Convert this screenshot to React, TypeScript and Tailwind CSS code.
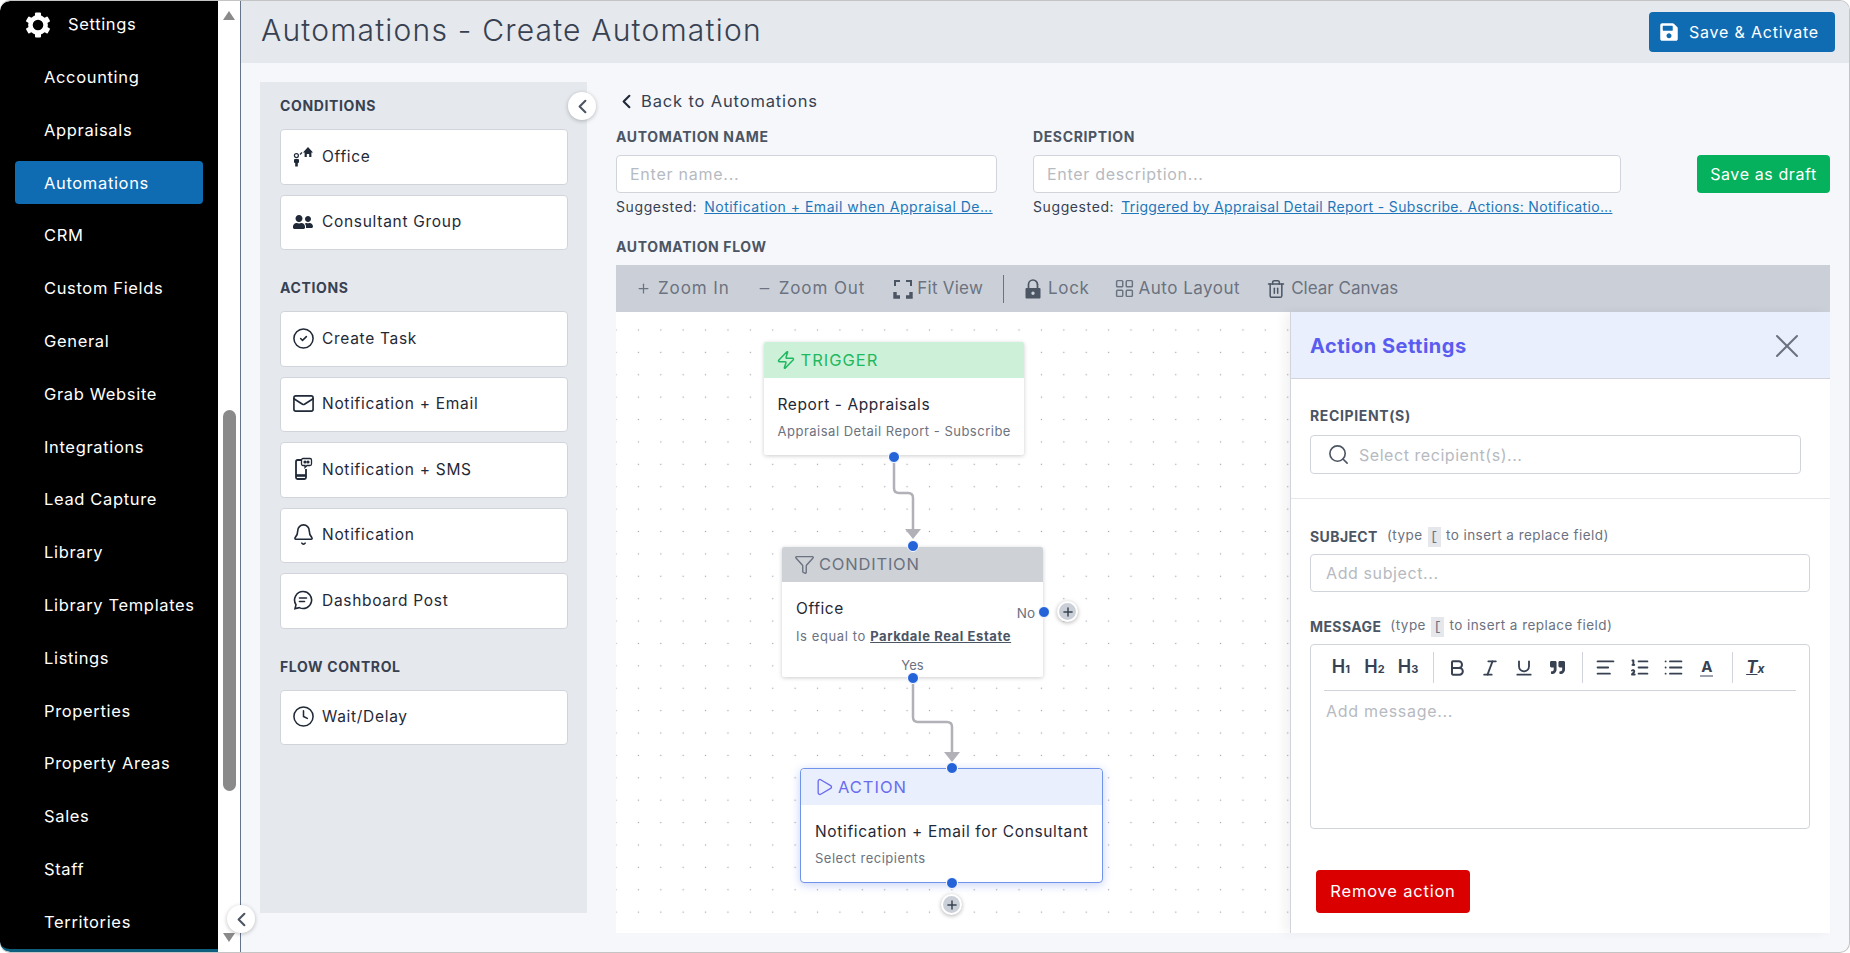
import { ChevronLeft, Plus, Minus, LayoutGrid, Trash2, Zap, Funnel, Play, X, Search, Mail, Bell, Clock, CircleCheck, Bold, Italic, Underline, AlignLeft, ListOrdered, List } from "lucide-react"
import { FaSave, FaUserFriends, FaQuoteRight } from "react-icons/fa"
import type { ReactNode } from "react"

const navItems = [
  "Accounting",
  "Appraisals",
  "Automations",
  "CRM",
  "Custom Fields",
  "General",
  "Grab Website",
  "Integrations",
  "Lead Capture",
  "Library",
  "Library Templates",
  "Listings",
  "Properties",
  "Property Areas",
  "Sales",
  "Staff",
  "Territories",
]

function GearIcon() {
  return (
    <svg viewBox="0 0 28 28" className="h-[28px] w-[28px]" fill="none" stroke="white">
      <circle cx="14" cy="14" r="7.6" strokeWidth="4.6" />
      {[0, 60, 120, 180, 240, 300].map((deg) => (
        <rect key={deg} x="11" y="1.5" width="6" height="5" rx="1" fill="white" stroke="none" transform={`rotate(${deg} 14 14)`} />
      ))}
    </svg>
  )
}

function OfficeIcon() {
  return (
    <svg viewBox="0 0 20 22" className="h-[22px] w-[20px]" fill="#1f2937">
      <path d="M10 7.5 15 2l5 5.5h-1.6V12h-2.2V9h-2.4v3h-2.2V7.5z" />
      <circle cx="3.4" cy="10.6" r="2" fill="none" stroke="#1f2937" strokeWidth="1.2" />
      <rect x="1" y="14" width="5" height="4" rx="1" />
      <rect x="2.2" y="17" width="2.6" height="4.5" />
      <path d="M7 9.5 9 7.5" stroke="#1f2937" strokeWidth="1.2" />
    </svg>
  )
}

function SmsIcon() {
  return (
    <svg viewBox="0 0 20 24" className="h-[24px] w-[20px]" fill="none" stroke="#1f2937" strokeWidth="1.8">
      <path d="M9 3H4.5A1.5 1.5 0 0 0 3 4.5v16A1.5 1.5 0 0 0 4.5 22h7a1.5 1.5 0 0 0 1.5-1.5V12" />
      <path d="M3 18.5h10" strokeWidth="2.6" />
      <path d="M10 1.5h7a1.5 1.5 0 0 1 1.5 1.5v4A1.5 1.5 0 0 1 17 8.5h-3l-2 2v-2h-2A1.5 1.5 0 0 1 8.5 7V3A1.5 1.5 0 0 1 10 1.5z" strokeWidth="1.3" />
      <circle cx="12" cy="5" r=".7" fill="#1f2937" />
      <circle cx="15" cy="5" r=".7" fill="#1f2937" />
    </svg>
  )
}

function PostIcon() {
  return (
    <svg viewBox="0 0 20 20" className="h-[20px] w-[20px] shrink-0" fill="none" stroke="#1f2937" strokeWidth="1.6" strokeLinecap="round">
      <path d="M10 1.5a8.5 8.5 0 1 1-3.7 16.1L2 18.6l1-3.9A8.5 8.5 0 0 1 10 1.5z" />
      <path d="M6.5 8h7M6.5 11.5h5" />
    </svg>
  )
}

function FitIcon() {
  return (
    <svg viewBox="0 0 20 20" className="h-[20px] w-[20px]" fill="none" stroke="#4b5563" strokeWidth="2">
      <path d="M2 7V2h5M13 2h5v5" />
      <path d="M2 13v5h5M18 13v5h-5" strokeWidth="3.4" />
    </svg>
  )
}

function LockIcon() {
  return (
    <svg viewBox="0 0 16 20" className="h-[20px] w-[16px]" fill="#4b5563">
      <path d="M3.5 9V5.5a4.5 4.5 0 0 1 9 0" fill="none" stroke="#4b5563" strokeWidth="1.7" />
      <path d="M12.5 5v4" stroke="#4b5563" strokeWidth="1.7" />
      <path fillRule="evenodd" d="M1.5 9h13a1 1 0 0 1 1 1v8.5a1 1 0 0 1-1 1h-13a1 1 0 0 1-1-1V10a1 1 0 0 1 1-1zM8 12.5a1.7 1.7 0 1 0 0 3.4 1.7 1.7 0 0 0 0-3.4z" />
    </svg>
  )
}

function PaletteRow({ icon, label }: { icon: ReactNode; label: string }) {
  return (
    <div className="flex h-[55.5px] items-center rounded border border-[#d1d5db] bg-white pb-[1px] pl-[12px] text-[15.5px] tracking-[0.7px] text-[#1f2937]">
      <span className="flex w-[20px] justify-center">{icon}</span>
      <span className="ml-[9px]">{label}</span>
    </div>
  )
}

function PaletteHeading({ children, className }: { children: ReactNode; className?: string }) {
  return <h3 className={`h-4 text-[14px] leading-4 font-bold tracking-[0.63px] text-[#374151] ${className}`}>{children}</h3>
}

function ToolbarButton({ icon, label, className, labelClass }: { icon: ReactNode; label: string; className?: string; labelClass: string }) {
  return (
    <span className={`flex items-center text-[#6b7280] ${className}`}>
      {icon}
      <span className={`text-[17px] ${labelClass}`}>{label}</span>
    </span>
  )
}

function Handle({ className }: { className: string }) {
  return <span className={`absolute h-[12px] w-[12px] rounded-full border border-white bg-[#2563d9] ${className}`} />
}

function AddButton({ className }: { className: string }) {
  return (
    <span className={`absolute flex h-[21px] w-[21px] items-center justify-center rounded-full border-2 border-white bg-[#cbd0d8] shadow-[0_1px_4px_rgba(0,0,0,0.3)] ${className}`}>
      <Plus size={14} strokeWidth={2.5} className="text-[#374151]" />
    </span>
  )
}

function EditorButton({ children }: { children: ReactNode }) {
  return <span className="flex w-[33.6px] justify-center text-[#374151]">{children}</span>
}

function EditorSep() {
  return <span className="mr-[6px] ml-[8px] h-[31px] w-px bg-[#d1d5db]" />
}

function HeadingGlyph({ n }: { n: number }) {
  return (
    <span className="text-[18px] leading-5 font-semibold text-[#374151]">
      H<span className="text-[11px] font-bold">{n}</span>
    </span>
  )
}

function FieldHint() {
  return (
    <span className="ml-[9px] text-[13.5px] font-normal tracking-[0.45px] text-[#6b7280]">
      (type <span className="mx-[1px] inline-block w-[13px] bg-[#e5e7eb] text-center font-mono">[</span> to insert a replace field)
    </span>
  )
}

export default function App() {
  return (
    <div className="relative flex h-[953px] w-[1850px] overflow-hidden rounded-[10px] border-y border-r border-[#c4c4c4] bg-[#f5f7fb] font-[Inter,sans-serif]">
      <aside className="flex h-full w-[218px] shrink-0 flex-col overflow-hidden rounded-l-[10px] border-b-[3px] border-[#0e5f7e] bg-black text-[16.5px] tracking-[0.65px] text-white">
        <div className="flex h-[50px] shrink-0 items-center pb-[3px] pl-[24px]">
          <GearIcon />
          <span className="ml-[16px]">Settings</span>
        </div>
        {navItems.map((item) => (
          <div key={item} className="flex h-[52.8px] shrink-0 items-center px-[15px]">
            <div className={`flex h-[43px] w-[190px] items-center rounded pl-[29px] ${item === "Automations" ? "bg-[#0f6cb3]" : ""}`}>{item}</div>
          </div>
        ))}
      </aside>

      <div className="flex h-full w-[23px] shrink-0 flex-col items-center border-r border-[#64748b] bg-white pt-[10px] pb-[10px]">
        <span className="h-0 w-0 border-x-[6px] border-b-[9px] border-x-transparent border-b-[#8a8a8a]" />
        <span className="mt-[390px] h-[381px] w-[13px] rounded-full bg-[#8a8a8a]" />
        <span className="mt-auto h-0 w-0 border-x-[6px] border-t-[9px] border-x-transparent border-t-[#8a8a8a]" />
      </div>

      <main className="flex min-w-0 flex-1 flex-col">
        <header className="flex h-[62px] shrink-0 items-start justify-between bg-[#e5e8ed] pr-[14.5px] pl-[20px]">
          <h1 className="mt-[11px] text-[30px] leading-[36px] font-light tracking-[1.2px] text-[#374151]">Automations - Create Automation</h1>
          <button className="mt-[11px] flex h-[40px] w-[185.5px] items-center rounded bg-[#0f6cb3] pl-[10px] text-[16px] tracking-[0.8px] text-white">
            <FaSave size={20} />
            <span className="ml-[10px]">Save &amp; Activate</span>
          </button>
        </header>

        <div className="flex min-h-0 flex-1">
          <section className="mt-[19px] ml-[19px] h-[831px] w-[327px] shrink-0 bg-[#e5e8ed] pt-[16px] pr-[19px] pl-[20px]">
            <PaletteHeading>CONDITIONS</PaletteHeading>
            <div className="mt-[15px] flex flex-col gap-[10px]">
              <PaletteRow icon={<OfficeIcon />} label="Office" />
              <PaletteRow icon={<FaUserFriends size={20} className="text-[#1f2937]" />} label="Consultant Group" />
            </div>
            <PaletteHeading className="mt-[30px]">ACTIONS</PaletteHeading>
            <div className="mt-[15px] flex flex-col gap-[10px]">
              <PaletteRow icon={<CircleCheck size={23} strokeWidth={1.6} className="shrink-0" />} label="Create Task" />
              <PaletteRow icon={<Mail size={23} strokeWidth={1.7} className="shrink-0" />} label="Notification + Email" />
              <PaletteRow icon={<SmsIcon />} label="Notification + SMS" />
              <PaletteRow icon={<Bell size={23} strokeWidth={1.7} className="shrink-0" />} label="Notification" />
              <PaletteRow icon={<PostIcon />} label="Dashboard Post" />
            </div>
            <PaletteHeading className="mt-[30px]">FLOW CONTROL</PaletteHeading>
            <div className="mt-[15px]">
              <PaletteRow icon={<Clock size={23} strokeWidth={1.6} className="shrink-0" />} label="Wait/Delay" />
            </div>
          </section>

          <section className="ml-[29px] flex w-[1214px] shrink-0 flex-col">
            <div className="mt-[28px] flex h-5 items-center text-[16.5px] tracking-[0.85px] text-[#374151]">
              <ChevronLeft size={23} strokeWidth={2.2} className="-ml-[1px] text-[#1f2937]" />
              <span className="ml-[3px]">Back to Automations</span>
            </div>

            <div className="mt-[18px] flex">
              <div className="w-[381px]">
                <label className="block h-4 text-[14px] leading-4 font-bold tracking-[0.63px] text-[#4b5563]">AUTOMATION NAME</label>
                <div className="mt-[10px] flex h-[38px] items-center rounded border border-[#d1d5db] bg-white pl-[13px] text-[16px] tracking-[0.75px] text-[#b6bac1]">Enter name...</div>
                <div className="mt-[5px] flex h-4 items-center text-[14px] tracking-[0.6px] whitespace-nowrap text-[#374151]">
                  Suggested:
                  <span className="ml-[7px] tracking-[0.5px] text-[#1f76b8] underline">Notification + Email when Appraisal De…</span>
                </div>
              </div>
              <div className="ml-[36px] w-[588px]">
                <label className="block h-4 text-[14px] leading-4 font-bold tracking-[0.63px] text-[#4b5563]">DESCRIPTION</label>
                <div className="mt-[10px] flex h-[38px] items-center rounded border border-[#d1d5db] bg-white pl-[13px] text-[16px] tracking-[0.7px] text-[#b6bac1]">Enter description...</div>
                <div className="mt-[5px] flex h-4 items-center text-[14px] tracking-[0.6px] whitespace-nowrap text-[#374151]">
                  Suggested:
                  <span className="ml-[7px] tracking-[0.35px] text-[#1f76b8] underline">Triggered by Appraisal Detail Report - Subscribe. Actions: Notificatio…</span>
                </div>
              </div>
              <button className="mt-[26px] ml-auto h-[38px] w-[133px] rounded bg-[#05b15c] text-[16px] tracking-[0.6px] text-white">Save as draft</button>
            </div>

            <label className="mt-[25px] block h-4 text-[14px] leading-4 font-bold tracking-[0.63px] text-[#4b5563]">AUTOMATION FLOW</label>

            <div className="mt-[10px] flex h-[47px] shrink-0 items-center bg-[#cbd0d8] pl-[20px]">
              <ToolbarButton labelClass="tracking-[0.9px]" icon={<Plus size={15} strokeWidth={2} className="mr-[7px]" />} label="Zoom In" />
              <ToolbarButton labelClass="tracking-[0.9px]" className="ml-[27px]" icon={<Minus size={15} strokeWidth={2} className="mr-[7px]" />} label="Zoom Out" />
              <ToolbarButton labelClass="tracking-[0.25px]" className="ml-[28px]" icon={<span className="mr-[4px]"><FitIcon /></span>} label="Fit View" />
              <span className="mr-[21px] ml-[20px] h-[28px] w-px bg-[#6b7280]" />
              <ToolbarButton labelClass="tracking-[0.65px]" icon={<span className="mr-[7px]"><LockIcon /></span>} label="Lock" />
              <ToolbarButton labelClass="tracking-[0.5px]" className="ml-[24px]" icon={<LayoutGrid size={21} strokeWidth={1.7} className="mr-[4px]" />} label="Auto Layout" />
              <ToolbarButton labelClass="tracking-[0px]" className="ml-[26px]" icon={<Trash2 size={20} strokeWidth={1.8} className="mr-[5px] text-[#4b5563]" />} label="Clear Canvas" />
            </div>

            <div className="flex h-[621px] shrink-0 bg-white">
              <div className="relative flex-1 bg-[radial-gradient(circle,#a3a7af_0.8px,transparent_1px)] bg-[size:22.4px_22.4px] bg-[position:-11.2px_6.8px]">
                <svg className="absolute inset-0 h-full w-full" fill="none" stroke="#b1b1b7" strokeWidth="2.5">
                  <path d="M278 149V176Q278 181 283 181H292Q297 181 297 186V218" />
                  <polygon points="289,217 305,217 297,227" fill="#b1b1b7" stroke="none" />
                  <path d="M297 366V405Q297 410 302 410H331Q336 410 336 415V441" />
                  <polygon points="328,440 344,440 336,450" fill="#b1b1b7" stroke="none" />
                </svg>

                <div className="absolute top-[30px] left-[147.5px] h-[113px] w-[260.5px] rounded-[2px] bg-white shadow-[0_1px_4px_rgba(0,0,0,0.2)]">
                  <div className="flex h-[36px] items-center rounded-t-[2px] bg-[#cdf0d8] pl-[12px] text-[16.5px] tracking-[1px] text-[#1eb85f]">
                    <Zap size={20} strokeWidth={1.8} />
                    <span className="ml-[5px]">TRIGGER</span>
                  </div>
                  <div className="px-[14px]">
                    <div className="mt-[17px] text-[15.5px] leading-[20px] tracking-[0.6px] text-[#1f2937]">Report - Appraisals</div>
                    <div className="mt-[7px] text-[13px] leading-[18px] tracking-[0.5px] whitespace-nowrap text-[#6b7280]">Appraisal Detail Report - Subscribe</div>
                  </div>
                </div>
                <Handle className="top-[139px] left-[272px]" />

                <div className="absolute top-[235px] left-[166px] h-[130px] w-[261px] rounded-[2px] bg-white shadow-[0_1px_4px_rgba(0,0,0,0.2)]">
                  <div className="flex h-[35px] items-center rounded-t-[2px] bg-[#ced1d6] pl-[12px] text-[16.5px] tracking-[0.8px] text-[#6b7280]">
                    <Funnel size={21} strokeWidth={1.6} />
                    <span className="ml-[4px]">CONDITION</span>
                  </div>
                  <div className="pl-[14px]">
                    <div className="mt-[17px] text-[15.5px] leading-[20px] tracking-[0.6px] text-[#1f2937]">Office</div>
                    <div className="mt-[8px] text-[13px] leading-[18px] tracking-[0.6px] whitespace-nowrap text-[#6b7280]">
                      Is equal to <span className="font-bold text-[#4b5563] underline">Parkdale Real Estate</span>
                    </div>
                  </div>
                  <span className="absolute top-[56px] right-[8px] text-[13.5px] text-[#6b7280]">No</span>
                  <span className="absolute bottom-[4px] left-0 w-full text-center text-[13px] leading-[16px] text-[#6b7280]">Yes</span>
                </div>
                <Handle className="top-[228px] left-[291px]" />
                <Handle className="top-[360px] left-[291px]" />
                <Handle className="top-[294px] left-[422px]" />
                <AddButton className="top-[289px] left-[441px]" />

                <div className="absolute top-[456px] left-[184px] h-[115px] w-[303px] rounded-[4px] border border-[#6f94ea] bg-white shadow-[0_2px_10px_rgba(70,110,230,0.3)]">
                  <div className="flex h-[36px] items-center rounded-t-[4px] bg-[#e9effc] pl-[13px] text-[16.5px] tracking-[1px] text-[#6a6cf0]">
                    <Play size={20} strokeWidth={1.6} />
                    <span className="ml-[4px]">ACTION</span>
                  </div>
                  <div className="pl-[14px]">
                    <div className="mt-[17px] text-[15.5px] leading-[20px] tracking-[0.65px] whitespace-nowrap text-[#1f2937]">Notification + Email for Consultant</div>
                    <div className="mt-[7px] text-[13px] leading-[18px] tracking-[0.5px] text-[#6b7280]">Select recipients</div>
                  </div>
                </div>
                <Handle className="top-[450px] left-[330px]" />
                <Handle className="top-[565px] left-[330px]" />
                <AddButton className="top-[582px] left-[325px]" />
              </div>

              <div className="z-10 w-[540px] shrink-0 border-l border-[#d1d5db] bg-white shadow-[-6px_0_10px_rgba(0,0,0,0.05)]">
                <div className="flex h-[67px] items-center justify-between border-b border-[#d1d5db] bg-[#e9effc] pt-[2px] pr-[23px] pl-[19px]">
                  <h2 className="text-[20px] font-bold tracking-[0.5px] text-[#5a5cf0]">Action Settings</h2>
                  <X size={40} strokeWidth={1.2} className="text-[#6b7280]" />
                </div>
                <div className="h-[120px] border-b border-[#e5e7eb] pt-[29px] pr-[29px] pl-[19px]">
                  <div className="h-4 text-[14px] leading-4 font-bold tracking-[0.63px] text-[#4b5563]">RECIPIENT(S)</div>
                  <div className="mt-[11px] flex h-[39px] items-center rounded border border-[#d1d5db] pl-[16px] text-[16px] tracking-[0.55px] text-[#b6bac1]">
                    <Search size={23} strokeWidth={1.7} className="text-[#4b5563]" />
                    <span className="ml-[9px]">Select recipient(s)...</span>
                  </div>
                </div>
                <div className="pt-[29px] pr-[20px] pl-[19px]">
                  <div className="flex h-4 items-center text-[14px] font-bold tracking-[0.4px] text-[#4b5563]">
                    SUBJECT
                    <FieldHint />
                  </div>
                  <div className="mt-[10px] flex h-[38px] items-center rounded border border-[#d1d5db] pl-[15px] text-[16px] tracking-[0.6px] text-[#b6bac1]">Add subject...</div>
                  <div className="mt-[26px] flex h-4 items-center text-[14px] font-bold tracking-[0.4px] text-[#4b5563]">
                    MESSAGE
                    <FieldHint />
                  </div>
                  <div className="mt-[10px] h-[185px] rounded border border-[#d1d5db] px-[13px]">
                    <div className="flex h-[46px] items-center border-b border-[#d1d5db]">
                      <EditorButton><HeadingGlyph n={1} /></EditorButton>
                      <EditorButton><HeadingGlyph n={2} /></EditorButton>
                      <EditorButton><HeadingGlyph n={3} /></EditorButton>
                      <EditorSep />
                      <EditorButton><Bold size={20} strokeWidth={2.4} /></EditorButton>
                      <EditorButton><Italic size={20} strokeWidth={2.2} /></EditorButton>
                      <EditorButton><Underline size={20} strokeWidth={2.2} /></EditorButton>
                      <EditorButton><FaQuoteRight size={15} /></EditorButton>
                      <EditorSep />
                      <EditorButton><AlignLeft size={21} strokeWidth={2.2} /></EditorButton>
                      <EditorButton><ListOrdered size={21} strokeWidth={2.2} /></EditorButton>
                      <EditorButton><List size={21} strokeWidth={2.2} /></EditorButton>
                      <EditorButton>
                        <span className="border-b-2 border-[#9ca3af] px-[1px] text-[15px] leading-[17px] font-bold">A</span>
                      </EditorButton>
                      <EditorSep />
                      <EditorButton>
                        <span className="text-[17px] leading-5 font-bold italic">
                          <span className="underline">T</span>
                          <span className="text-[12px]">x</span>
                        </span>
                      </EditorButton>
                    </div>
                    <div className="mt-[10px] pl-[2px] text-[16px] leading-5 tracking-[0.7px] text-[#b6bac1]">Add message...</div>
                  </div>
                  <button className="mt-[41px] ml-[6px] h-[43px] w-[154px] rounded bg-[#da0000] text-[16.5px] tracking-[0.8px] text-white">Remove action</button>
                </div>
              </div>
            </div>
          </section>
        </div>
      </main>

      <span className="absolute top-[91px] left-[568px] flex h-[28px] w-[28px] items-center justify-center rounded-full bg-white shadow-[0_1px_4px_rgba(0,0,0,0.25)]">
        <ChevronLeft size={23} strokeWidth={2.2} className="text-[#4b5563]" />
      </span>
      <span className="absolute top-[904px] left-[227px] flex h-[28px] w-[28px] items-center justify-center rounded-full bg-white shadow-[0_1px_4px_rgba(0,0,0,0.25)]">
        <ChevronLeft size={23} strokeWidth={2.2} className="text-[#4b5563]" />
      </span>
    </div>
  )
}
